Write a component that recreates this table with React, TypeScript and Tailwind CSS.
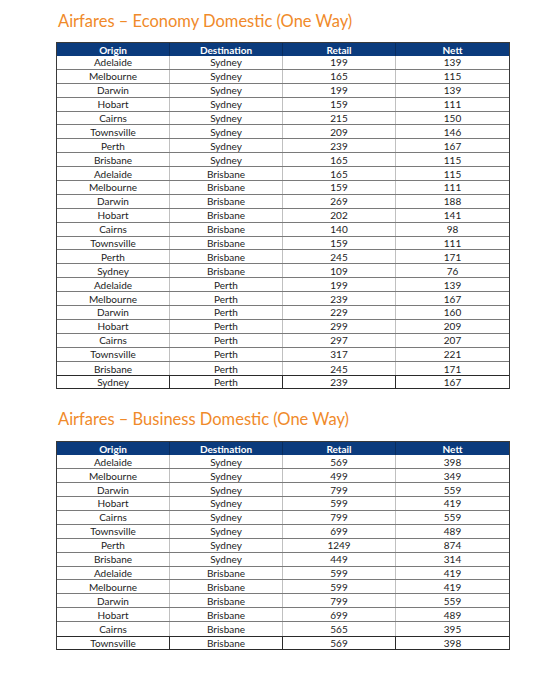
import React from 'react'

type Fare = [string, string, number, number]

const ECONOMY: Fare[] = [
  ['Adelaide', 'Sydney', 199, 139],
  ['Melbourne', 'Sydney', 165, 115],
  ['Darwin', 'Sydney', 199, 139],
  ['Hobart', 'Sydney', 159, 111],
  ['Cairns', 'Sydney', 215, 150],
  ['Townsville', 'Sydney', 209, 146],
  ['Perth', 'Sydney', 239, 167],
  ['Brisbane', 'Sydney', 165, 115],
  ['Adelaide', 'Brisbane', 165, 115],
  ['Melbourne', 'Brisbane', 159, 111],
  ['Darwin', 'Brisbane', 269, 188],
  ['Hobart', 'Brisbane', 202, 141],
  ['Cairns', 'Brisbane', 140, 98],
  ['Townsville', 'Brisbane', 159, 111],
  ['Perth', 'Brisbane', 245, 171],
  ['Sydney', 'Brisbane', 109, 76],
  ['Adelaide', 'Perth', 199, 139],
  ['Melbourne', 'Perth', 239, 167],
  ['Darwin', 'Perth', 229, 160],
  ['Hobart', 'Perth', 299, 209],
  ['Cairns', 'Perth', 297, 207],
  ['Townsville', 'Perth', 317, 221],
  ['Brisbane', 'Perth', 245, 171],
  ['Sydney', 'Perth', 239, 167],
]

const BUSINESS: Fare[] = [
  ['Adelaide', 'Sydney', 569, 398],
  ['Melbourne', 'Sydney', 499, 349],
  ['Darwin', 'Sydney', 799, 559],
  ['Hobart', 'Sydney', 599, 419],
  ['Cairns', 'Sydney', 799, 559],
  ['Townsville', 'Sydney', 699, 489],
  ['Perth', 'Sydney', 1249, 874],
  ['Brisbane', 'Sydney', 449, 314],
  ['Adelaide', 'Brisbane', 599, 419],
  ['Melbourne', 'Brisbane', 599, 419],
  ['Darwin', 'Brisbane', 799, 559],
  ['Hobart', 'Brisbane', 699, 489],
  ['Cairns', 'Brisbane', 565, 395],
  ['Townsville', 'Brisbane', 569, 398],
]

function FareTable({ rows }: { rows: Fare[] }) {
  const body = rows.slice(0, -1)
  const last = rows[rows.length - 1]
  return (
    <div className="w-[454px] border-x border-t border-[#3a3a3a] text-[10px] leading-none">
      <div className="grid grid-cols-4 h-[13px] bg-[#0b3b7d] text-white font-bold">
        {['Origin', 'Destination', 'Retail', 'Nett'].map((h) => (
          <div key={h} className="flex items-center justify-center border-r border-[#082c5e] last:border-r-0">
            {h}
          </div>
        ))}
      </div>
      <div className="flex flex-col divide-y divide-[#7a7a7a] border-b border-[#7a7a7a]">
        {body.map((r, i) => (
          <div key={i} className="grid grid-cols-4 h-[13.9px] divide-x divide-[#c0c0c0]">
            {r.map((c, j) => (
              <div key={j} className="flex items-center justify-center text-[#1c1c1c]">
                {c}
              </div>
            ))}
          </div>
        ))}
      </div>
      <div className="grid grid-cols-4 h-[13.9px] -mt-px border-y border-[#2a2a2a] divide-x divide-[#2a2a2a]">
        {last.map((c, j) => (
          <div key={j} className="flex items-center justify-center text-[#1c1c1c]">
            {c}
          </div>
        ))}
      </div>
    </div>
  )
}

export default function App() {
  return (
    <div className="w-[555px] h-[681px] bg-white pl-[56px] pt-[10px] font-['Lato','Liberation_Sans',sans-serif]">
      <h1 className="text-[16.5px] leading-[22px] text-[#f08a2a] pl-[2px] mb-[10px]">
        Airfares – Economy Domestic (One Way)
      </h1>
      <FareTable rows={ECONOMY} />
      <h1 className="text-[16.5px] leading-[22px] text-[#f08a2a] pl-[2px] mt-[19px] mb-[11px]">
        Airfares – Business Domestic (One Way)
      </h1>
      <FareTable rows={BUSINESS} />
    </div>
  )
}
